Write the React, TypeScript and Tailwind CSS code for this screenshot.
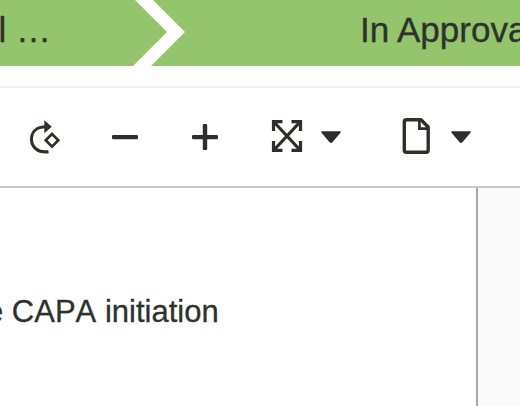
import type { ReactNode } from "react";

function Tool({ className, children }: { className: string; children: ReactNode }) {
  return (
    <button className={`block shrink-0 ${className}`}>
      <svg className="block h-full w-full" viewBox="0 0 40 40" fill="none" stroke="#2b302b">
        {children}
      </svg>
    </button>
  );
}

function Caret() {
  return (
    <svg className="block h-10 w-[22px] shrink-0" viewBox="0 0 22 40" fill="#2b302b">
      <path d="M2 14.2h18q1.5 0 .5 1.5L12.4 25.2q-1.4 1.4-2.8 0L1.5 15.7Q.5 14.2 2 14.2Z" />
    </svg>
  );
}

export default function App() {
  return (
    <main className="flex h-[406px] w-[520px] flex-col overflow-hidden bg-white font-['Liberation_Sans',Arial,sans-serif] text-[#2d322d]">
      <header className="flex h-[66px] shrink-0 overflow-hidden bg-[#94c56c] text-[35px] leading-[60px] whitespace-nowrap [-webkit-text-stroke:0.35px_#2d322d]">
        <div className="flex w-[133px] shrink-0 justify-start">
          <span className="-ml-[1.5px]">l …</span>
        </div>
        <svg className="block h-[66px] w-[52px] shrink-0" viewBox="0 0 52 66" fill="#fff">
          <path d="M2 0H20L52 32L18 66H0L34 32Z" />
        </svg>
        <span className="ml-[175px]">In Approval</span>
      </header>
      <div className="h-5 shrink-0" />
      <nav className="flex h-[102px] shrink-0 items-center border-t-2 border-b-2 border-t-[#f0f0f0] border-b-[#c8c8c8] pl-[25px]">
        <Tool className="h-10 w-10">
          <path d="M23.5 34.6C13 36.3 6.5 30 6.5 22.2C6.5 14.5 12 9.8 21 9.8" strokeWidth="3.1" />
          <path d="M19.3 3.3L26.8 9.7L19.3 16.2Z" fill="#2b302b" stroke="none" />
          <path d="M27 17L33.3 23.3L27 29.6L20.7 23.3Z" strokeWidth="2.7" />
        </Tool>
        <Tool className="ml-10 h-10 w-10">
          <rect x="7" y="18" width="26" height="4.2" rx="1.3" fill="#2b302b" stroke="none" />
        </Tool>
        <Tool className="ml-10 h-10 w-10">
          <rect x="7" y="18" width="26" height="4.2" rx="1.3" fill="#2b302b" stroke="none" />
          <rect x="17.8" y="7" width="4.4" height="26" rx="1.3" fill="#2b302b" stroke="none" />
        </Tool>
        <Tool className="ml-[42px] h-10 w-10">
          <path d="M7 5L33 33M33 5L7 33" strokeWidth="3.3" />
          <path d="M6.5 14V4.6h9M24.5 4.6h9V14M6.5 24v9.4h9M24.5 33.4h9V24" strokeWidth="3.2" />
        </Tool>
        <div className="ml-[13px]"><Caret /></div>
        <Tool className="ml-[54px] h-10 w-10">
          <path d="M10.5 2.8H25L32.2 10V33Q32.2 35.2 30 35.2H10.5Q8.3 35.2 8.3 33V5Q8.3 2.8 10.5 2.8Z" strokeWidth="3.4" strokeLinejoin="round" />
          <path d="M23.4 3V11.6H32" strokeWidth="2.7" />
        </Tool>
        <div className="ml-[14px]"><Caret /></div>
      </nav>
      <section className="flex min-h-0 flex-1">
        <div className="flex w-[478px] shrink-0 justify-start border-r-2 border-[#a6a6a6] bg-white pt-[106px]">
          <p className="-ml-[14px] text-[31px] leading-9 whitespace-nowrap [font-kerning:none] [-webkit-text-stroke:0.3px_#2d322d]">e CAPA initiation</p>
        </div>
        <aside className="flex-1 bg-[#fafafa]" />
      </section>
    </main>
  );
}
